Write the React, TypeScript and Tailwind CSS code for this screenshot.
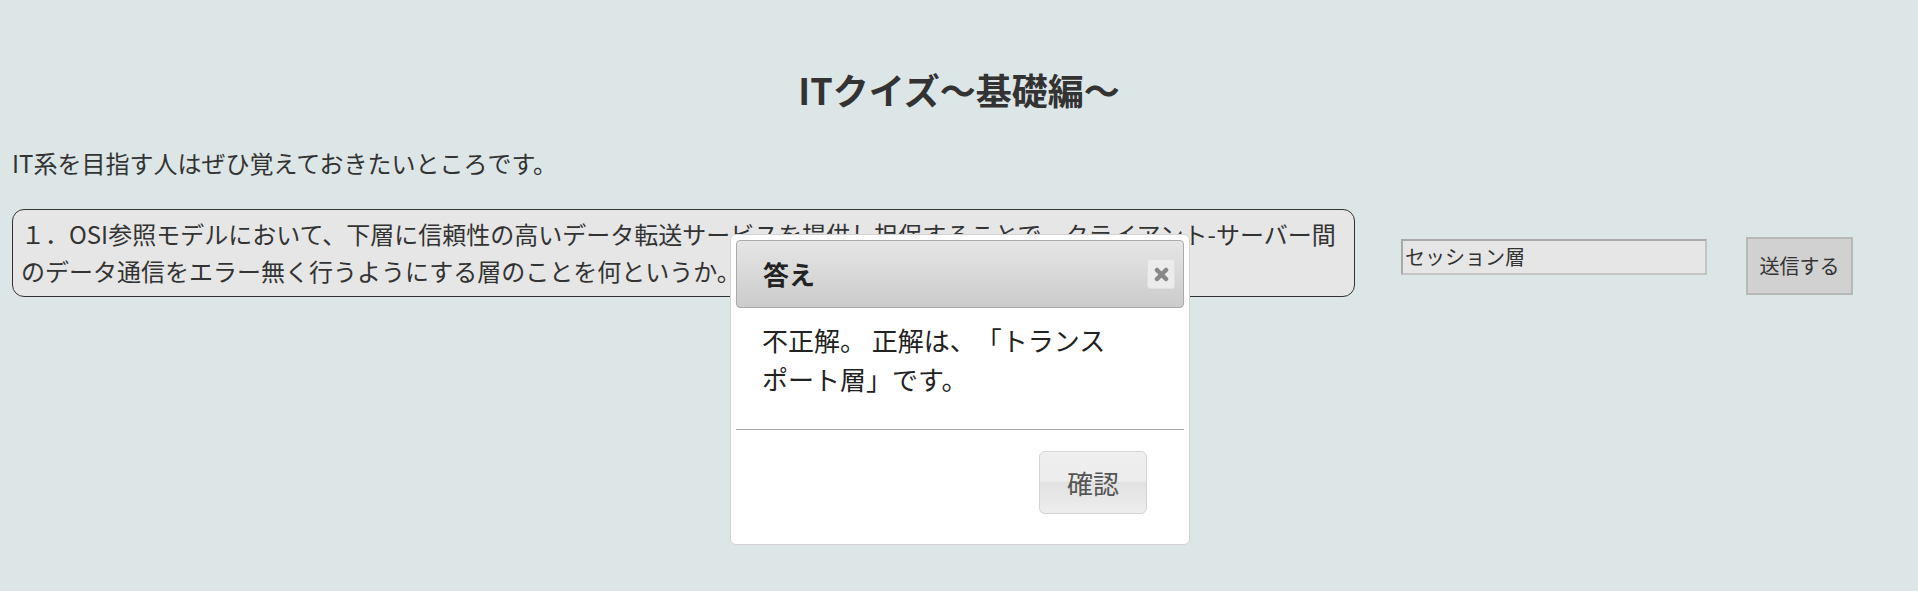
import React from "react";

export default function App() {
  const jp = { fontFamily: '"Noto Sans CJK JP", "Noto Sans", sans-serif' };
  return (
    <div
      className="relative w-[1918px] h-[591px] bg-[#dce6e6] text-[#333333] overflow-hidden [text-spacing-trim:space-all]"
      style={jp}
    >
      <div className="px-[12px]">
        <h1 className="pt-[62px] text-center text-[36px] font-bold leading-[54px] text-[#333333]">
          ITクイズ～基礎編～
        </h1>
        <p className="mt-[29px] text-[24px] leading-[36px]">
          IT系を目指す人はぜひ覚えておきたいところです。
        </p>
        <div className="mt-[28px] flex items-start">
          <div className="w-[1343px] h-[88px] shrink-0 rounded-[12px] border border-[#333333] bg-[#e6e6e6] pl-[8px] pt-[5px] text-[24px] leading-[37px] whitespace-nowrap">
            １．OSI参照モデルにおいて、下層に信頼性の高いデータ転送サービスを提供し担保することで、クライアント-サーバー間
            <br />
            のデータ通信をエラー無く行うようにする層のことを何というか。
          </div>
          <div className="ml-[46px] mt-[30px] flex h-[36px] w-[306px] shrink-0 items-center border-2 border-[#a9a9a9] border-r-[#c4c4c4] border-b-[#c4c4c4] bg-[#e6e6e6] pl-[2px] text-[20px] text-[#333333]">
            セッション層
          </div>
          <div className="ml-[39px] mt-[28px] flex h-[58px] w-[107px] shrink-0 items-center justify-center border-2 border-[#b8b8b8] bg-[#d1d1d1] text-[20px] text-[#333333]">
            送信する
          </div>
        </div>
      </div>

      {/* dialog overlay */}
      <div className="absolute left-[730px] top-[234px] w-[460px] rounded-[6px] border border-[#d3d3d3] bg-white p-[5px]">
        <div className="flex h-[68px] items-center justify-between rounded-[4px] border border-[#aaaaaa] bg-gradient-to-b from-[#e6e6e6] to-[#cbcbcb] pl-[26px] pr-[8px]">
          <span className="text-[26px] font-bold leading-none text-[#222222]">答え</span>
          <div className="flex h-[30px] w-[28px] items-center justify-center rounded-[3px] border border-[#e0e0e0] bg-[#ececec]">
            <svg width="15" height="15" viewBox="0 0 15 15">
              <path d="M3 3 L12 12 M12 3 L3 12" stroke="#888888" strokeWidth="4.5" strokeLinecap="round" />
            </svg>
          </div>
        </div>
        <div className="px-[26px] pt-[12px] pb-[31px] text-[26px] leading-[39px] text-[#222222] whitespace-nowrap">
          不正解。 正解は、「トランス
          <br />
          ポート層」です。
        </div>
        <div className="h-px bg-[#aaaaaa]" />
        <div className="flex justify-end pt-[21px] pb-[25px] pr-[37px]">
          <div className="flex h-[63px] w-[108px] items-center justify-center rounded-[6px] border border-[#d3d3d3] bg-[linear-gradient(to_bottom,#efefef_0%,#ececec_48%,#e1e1e1_50%,#eeeeee_100%)] text-[26px] text-[#555555]">
            確認
          </div>
        </div>
      </div>
    </div>
  );
}
